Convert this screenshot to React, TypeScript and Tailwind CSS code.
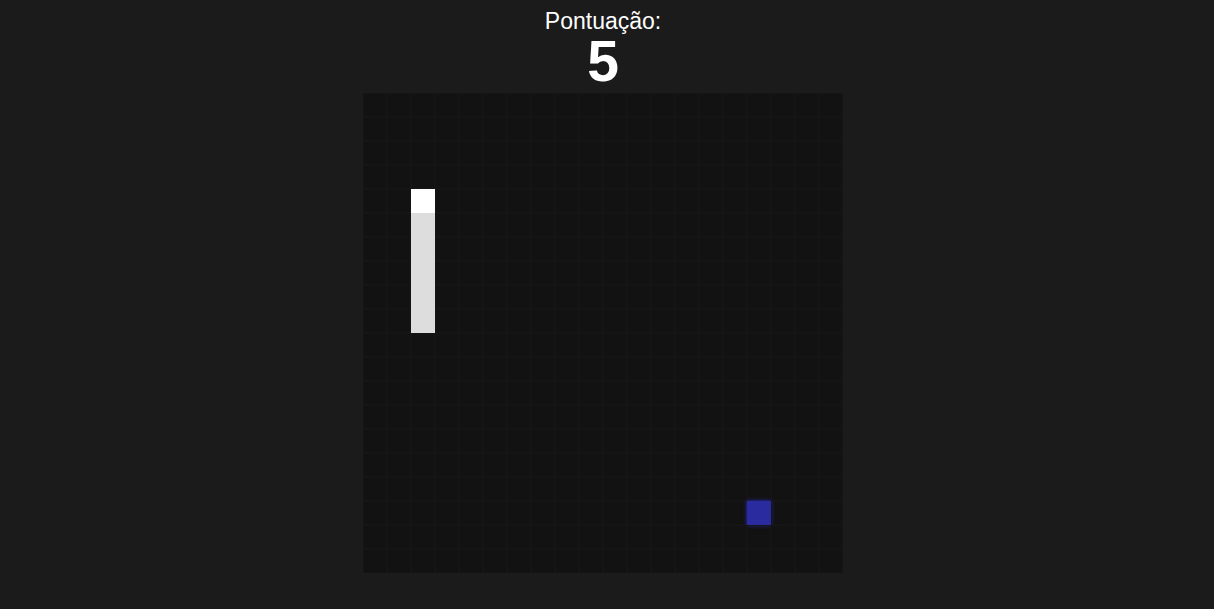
const SIZE = 20

const snake = [
  { x: 2, y: 4 },
  { x: 2, y: 5 },
  { x: 2, y: 6 },
  { x: 2, y: 7 },
  { x: 2, y: 8 },
  { x: 2, y: 9 },
]
const food = { x: 16, y: 17 }

function cellClass(x: number, y: number): string {
  const idx = snake.findIndex(s => s.x === x && s.y === y)
  if (idx === 0) return 'bg-white'
  if (idx > 0) return 'bg-[#dddddd]'
  if (food.x === x && food.y === y)
    return 'bg-[#2b2ba0] shadow-[0_0_4px_#2b2bd0]'
  return 'border border-[#151515]'
}

export default function App() {
  const cells = []
  for (let y = 0; y < SIZE; y++) {
    for (let x = 0; x < SIZE; x++) {
      cells.push(<div key={`${x}-${y}`} className={`w-6 h-6 ${cellClass(x, y)}`} />)
    }
  }

  return (
    <div className="min-h-screen bg-[#1b1b1b] flex flex-col items-center pr-2 font-['Liberation_Sans',Arial,sans-serif] text-white">
      <div className="mt-[8px] text-[23px] leading-[26px]">Pontuação:</div>
      <div className="text-[57px] font-bold leading-[57px] -mt-[1px] mb-[3px]">5</div>
      <div className="grid grid-cols-[repeat(20,24px)] bg-[#121212]">{cells}</div>
    </div>
  )
}
